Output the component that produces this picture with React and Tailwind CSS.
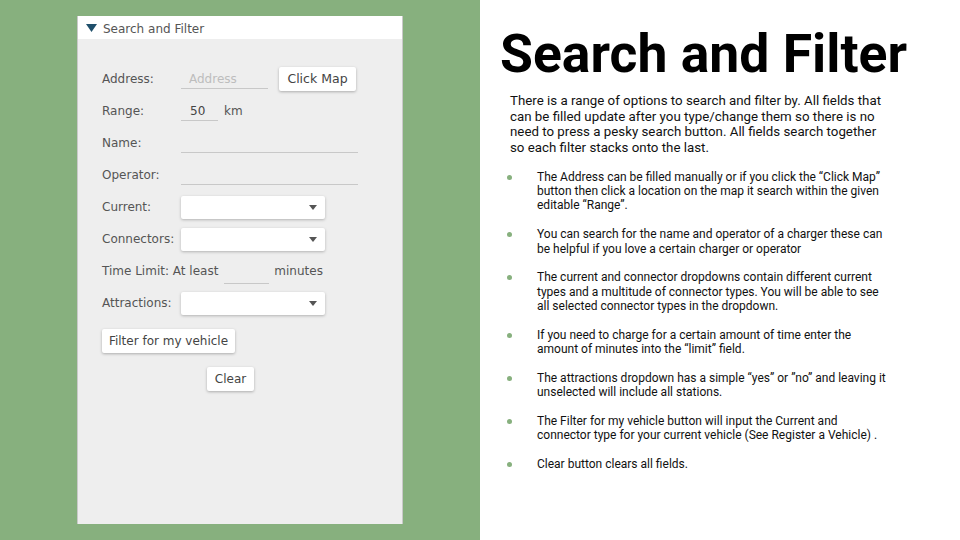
const panelFont = { fontFamily: '"DejaVu Sans", Verdana, sans-serif' };

function Underline({ width, value, placeholder }) {
  return (
    <div className={`h-[20px] border-b border-[#c8c8c8] flex items-center ${width}`}>
      {value && <span className="pl-[9px] text-[#444]">{value}</span>}
      {placeholder && <span className="pl-[8px] text-[#bdbdbd]">{placeholder}</span>}
    </div>
  );
}

function Select() {
  return (
    <div className="w-[144px] h-[23px] bg-white rounded-[2px] shadow-[0_1px_3px_rgba(0,0,0,0.25)] flex items-center justify-end pr-[8px]">
      <svg width="8" height="5" viewBox="0 0 8 5">
        <path d="M0 0 L8 0 L4 5 Z" fill="#555" />
      </svg>
    </div>
  );
}

function Btn({ children, className = "" }) {
  return (
    <div className={`h-[24px] bg-white rounded-[2px] shadow-[0_1px_3px_rgba(0,0,0,0.28)] flex items-center justify-center text-[#444] ${className}`}>
      {children}
    </div>
  );
}

function Row({ label, children }) {
  return (
    <div className="h-[32px] flex items-center">
      <div className="w-[79px] text-[#555]">{label}</div>
      {children}
    </div>
  );
}

const bullets = [
  "The Address can be filled manually or if you click the \u201cClick Map\u201d button then click a location on the map it search within the given editable \u201cRange\u201d.",
  "You can search for the name and operator of a charger these can be helpful if you love a certain charger or operator",
  "The current and connector dropdowns contain different current types and a multitude of connector types. You will be able to see all selected connector types in the dropdown.",
  "If you need to charge for a certain amount of time enter the amount of minutes into the \u201climit\u201d field.",
  "The attractions dropdown has a simple \u201cyes\u201d or \u201dno\u201d and leaving it unselected will include all stations.",
  "The Filter for my vehicle button will input the Current and connector type for your current vehicle (See Register a Vehicle) .",
  "Clear button clears all fields.",
];

export default function App() {
  return (
    <div className="w-[960px] h-[540px] flex bg-white overflow-hidden">
      <div className="w-[480px] h-full bg-[#87b07e] pl-[77px] pt-[16px]">
        <div
          className="w-[326px] h-[508px] bg-[#eeeeee] border-l border-r border-[#c9c9c9] flex flex-col text-[12px]"
          style={panelFont}
        >
          <div className="h-[23px] bg-white flex items-center pl-[8px] pt-[2px] gap-[6px] text-[#555]">
            <svg width="11" height="9" viewBox="0 0 11 9">
              <path d="M0 0 L11 0 L5.5 8 Z" fill="#1f4f6b" />
            </svg>
            <span>Search and Filter</span>
          </div>
          <div className="pl-[24px] pt-[24px] flex flex-col">
            <Row label="Address:">
              <Underline width="w-[87px]" placeholder="Address" />
              <Btn className="w-[77px] ml-[11px] text-[12.5px]">Click Map</Btn>
            </Row>
            <Row label="Range:">
              <Underline width="w-[37px]" value="50" />
              <span className="ml-[6px] text-[#555]">km</span>
            </Row>
            <Row label="Name:">
              <Underline width="w-[177px]" />
            </Row>
            <Row label="Operator:">
              <Underline width="w-[177px]" />
            </Row>
            <Row label="Current:">
              <Select />
            </Row>
            <Row label="Connectors:">
              <Select />
            </Row>
            <div className="h-[32px] flex items-center text-[#555]">
              <span>Time Limit: At least</span>
              <div className="w-[45px] h-[20px] border-b border-[#c8c8c8] ml-[6px] mt-[6px]" />
              <span className="ml-[5px]">minutes</span>
            </div>
            <Row label="Attractions:">
              <Select />
            </Row>
            <Btn className="w-[133px] mt-[10px]">Filter for my vehicle</Btn>
            <div className="w-[257px] flex justify-center mt-[14px]">
              <Btn className="w-[47px]">Clear</Btn>
            </div>
          </div>
        </div>
      </div>
      <div className="flex-1 pl-[20px] pt-[26px]" style={{ fontFamily: 'Roboto, "Liberation Sans", sans-serif' }}>
        <h1 className="text-[53.5px] font-bold leading-[56px] text-black">Search and Filter</h1>
        <p className="mt-[11px] ml-[10px] w-[376px] text-[13.3px] leading-[15.7px] text-[#111]">
          There is a range of options to search and filter by. All fields that can be filled update after you type/change them so there is no need to press a pesky search button. All fields search together so each filter stacks onto the last.
        </p>
        <ul className="mt-[14px] flex flex-col gap-[14.5px]">
          {bullets.map((b, i) => (
            <li key={i} className="flex text-[12px] leading-[14.3px] text-[#111]">
              <span className="w-[37px] shrink-0 pl-[7px] pt-[5px]">
                <span className="block w-[5px] h-[5px] rounded-full bg-[#87b07e]" />
              </span>
              <span className="w-[351px]">{b}</span>
            </li>
          ))}
        </ul>
      </div>
    </div>
  );
}
